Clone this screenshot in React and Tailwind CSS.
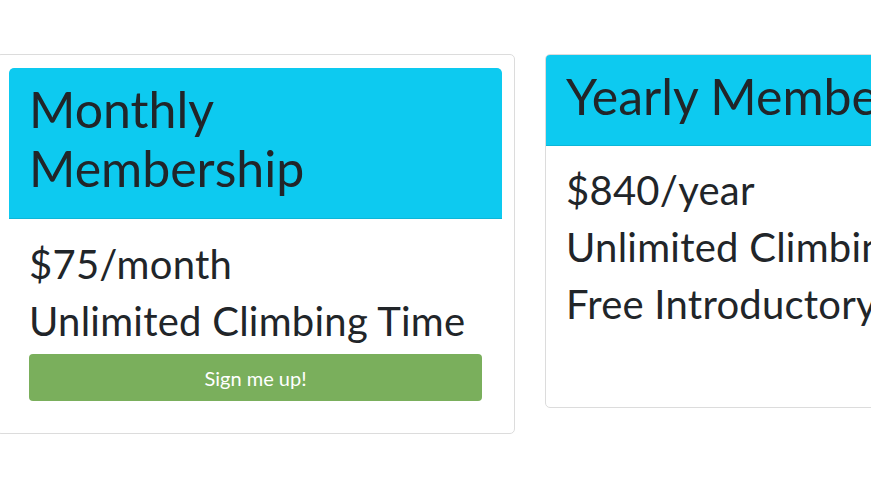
const FONT = { fontFamily: "Lato, 'Open Sans', sans-serif" };

const PlanCard = ({ title, lines, button }) => (
  <div className="w-[493px] shrink-0 rounded-[5px] overflow-hidden">
    <div className="bg-[#0dcaf0] border-b border-[#0cb6d8] px-5 pt-3 pb-3 rounded-t-[4px]">
      <h1 className="max-w-[420px] text-[50px] leading-[59px] mb-2 text-[#212529]">{title}</h1>
    </div>
    <div className="px-5 pt-[21px] pb-5">
      {lines.map((l) => (
        <p key={l} className="text-[40px] leading-[49px] tracking-[0.25px] mb-2 text-[#212529] whitespace-nowrap">{l}</p>
      ))}
      {button && (
        <button className="w-full h-[47px] bg-[#7aaf5c] rounded-[4px] text-white text-[20px] leading-[30px]">
          Sign me up!
        </button>
      )}
    </div>
  </div>
);

export default function App() {
  return (
    <div className="w-full h-[477px] bg-white overflow-hidden pt-[54px]" style={FONT}>
      <div className="flex items-start gap-[30px] -ml-1">
        <div className="shrink-0 border border-[#dcdcdc] rounded-[5px] px-3 pt-[13px] pb-3">
          <PlanCard
            title="Monthly Membership"
            lines={["$75/month", "Unlimited Climbing Time"]}
            button
          />
        </div>
        <div className="shrink-0 w-[519px] border border-[#dcdcdc] rounded-[5px] overflow-hidden">
          <div className="bg-[#0dcaf0] border-b border-[#0cb6d8] px-5 pt-3 pb-[11px]">
            <h1 className="text-[50px] leading-[59px] mb-2 text-[#212529] whitespace-nowrap">Yearly Membership</h1>
          </div>
          <div className="px-5 pt-5 pb-[70px]">
            {["$840/year", "Unlimited Climbing Time", "Free Introductory Lesson"].map((l) => (
              <p key={l} className="text-[40px] leading-[49px] tracking-[0.25px] mb-2 text-[#212529] whitespace-nowrap">{l}</p>
            ))}
          </div>
        </div>
      </div>
    </div>
  );
}
